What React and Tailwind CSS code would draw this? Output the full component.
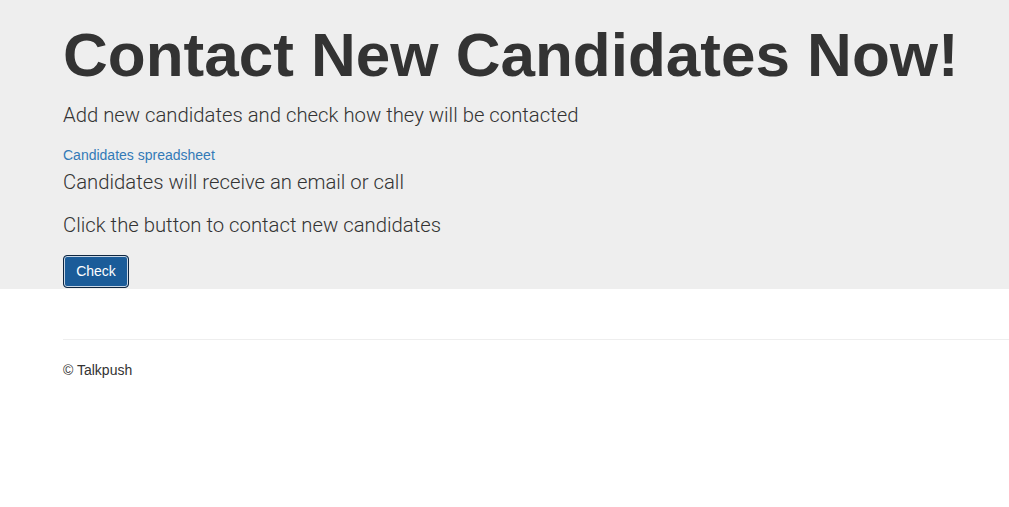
export default function App() {
    return (
        <div className="min-h-[507px] bg-white text-[#333]" style={{ fontFamily: '"Liberation Sans", Arial, sans-serif' }}>
            {/* Jumbotron */}
            <div className="bg-[#eeeeee] pl-[63px] pt-[20px] pb-[1px]">
                <h1 className="text-[62px] leading-[69px] font-bold text-[#333] whitespace-nowrap">
                    Contact New Candidates Now!
                </h1>
                <p className="mt-[12px] text-[20.3px] leading-[28px] font-light text-[#333] font-['Roboto',sans-serif]">
                    Add new candidates and check how they will be contacted
                </p>
                <div className="mt-[16px] text-[14px] leading-[20px]">
                    <a href="#" className="text-[#337ab7]">Candidates spreadsheet</a>
                </div>
                <p className="mt-[3px] text-[20.3px] leading-[28px] font-light font-['Roboto',sans-serif]">
                    Candidates will receive an email or call
                </p>
                <p className="mt-[15px] text-[20.3px] leading-[28px] font-light font-['Roboto',sans-serif]">
                    Click the button to contact new candidates
                </p>
                <button className="mt-[16px] h-[33px] w-[66px] rounded-[4px] border border-[#0f2640] bg-[#1b5c99] text-[14px] text-white shadow-[inset_0_0_0_1px_#c9d7e6]">
                    Check
                </button>
            </div>

            {/* Footer */}
            <div className="pl-[63px] pt-[50px]">
                <hr className="border-t border-[#eeeeee]" />
                <p className="mt-[20px] text-[14px] leading-[20px]">© Talkpush</p>
            </div>
        </div>
    );
}
